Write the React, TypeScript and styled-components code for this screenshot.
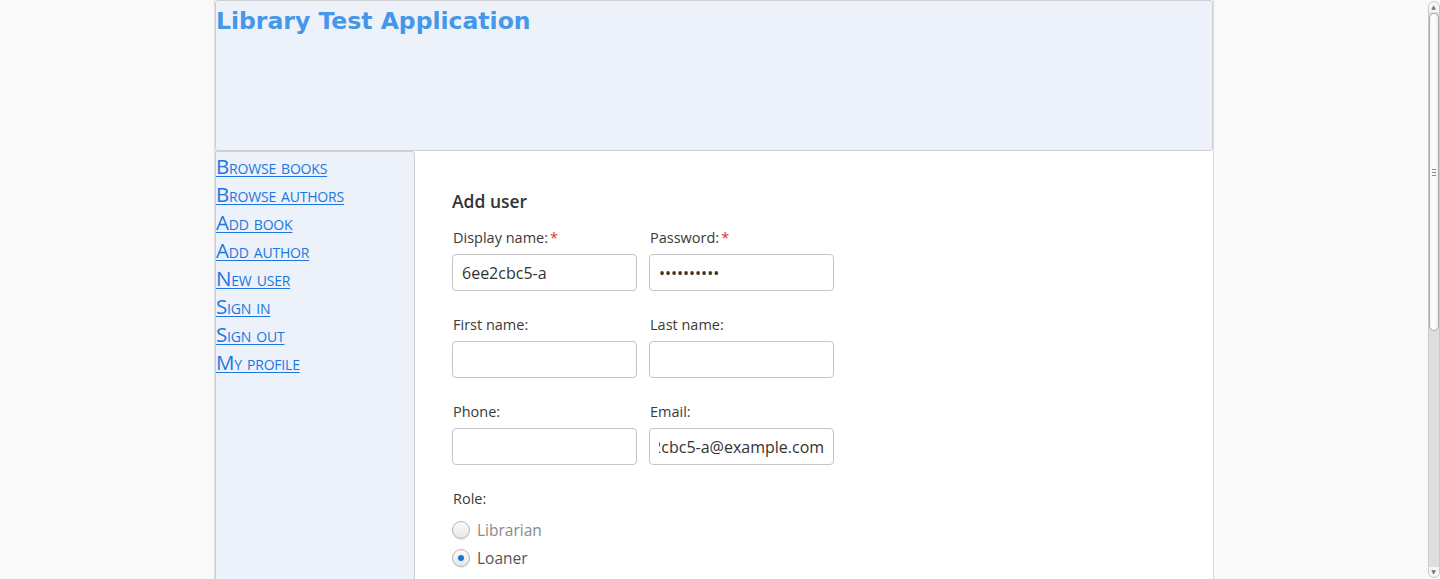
import React, { useEffect, useRef } from "react";
import styled, { createGlobalStyle } from "styled-components";

const Global = createGlobalStyle`
  html, body { margin: 0; padding: 0; }
  body { background: #f9f9f9; font-family: "Open Sans", "DejaVu Sans", sans-serif; }
  ::-webkit-scrollbar { width: 0; height: 0; }
`;

const Page = styled.div`
  width: 998px;
  margin-left: calc(50% - 506px);
  background: #ffffff;
  border-left: 1px solid #dcdcdc;
  border-right: 1px solid #dcdcdc;
  min-height: 1010px;
  display: flex;
  flex-direction: column;
`;

const Header = styled.header`
  height: 149px;
  background: #edf1f9;
  border: 1px solid #cfcfcf;
  border-radius: 3px;
`;

const Title = styled.h1`
  margin: 0;
  padding: 5px 0 0 0;
  font-family: "DejaVu Sans", sans-serif;
  font-weight: bold;
  font-size: 23.5px;
  line-height: 30px;
  color: #4597ea;
`;

const Body = styled.div`
  flex: 1;
  display: flex;
`;

const Sidebar = styled.nav`
  width: 198px;
  background: #edf1f9;
  border: 1px solid #cfcfcf;
  border-radius: 0 3px 0 0;
  display: flex;
  flex-direction: column;
`;

const NavLink = styled.a`
  font-family: "Open Sans", sans-serif;
  font-variant: small-caps;
  font-size: 20.5px;
  line-height: 28px;
  color: #1a78e0;
  text-decoration: underline;
  text-decoration-thickness: 1px;
  text-underline-offset: 2px;
  letter-spacing: -0.2px;
`;

const Main = styled.main`
  flex: 1;
  padding: 36px 37px;
`;

const Heading = styled.h2`
  margin: 0 0 13px 0;
  font-size: 17.5px;
  font-weight: 600;
  color: #333;
  line-height: 28px;
`;

const Grid = styled.div`
  display: grid;
  grid-template-columns: 185px 185px;
  column-gap: 12px;
  row-gap: 24px;
`;

const Field = styled.div`
  display: flex;
  flex-direction: column;
`;

const Label = styled.label`
  font-size: 14.5px;
  line-height: 20px;
  color: #3a3a3a;
  padding-left: 1px;
  margin-bottom: 6px;
`;

const Req = styled.span`
  color: #e03030;
  margin-left: 2px;
`;

const Input = styled.input`
  box-sizing: border-box;
  width: 185px;
  height: 37px;
  border: 1px solid #c4c4c4;
  border-radius: 4px;
  padding: 0 9px;
  font-family: "Open Sans", sans-serif;
  font-size: 16px;
  color: #333;
  background: #fff;
  outline: none;
`;

const RoleBlock = styled.div`
  margin-top: 24px;
  display: flex;
  flex-direction: column;
`;

const RadioList = styled.div`
  margin-top: 1px;
  display: flex;
  flex-direction: column;
`;

const RadioRow = styled.label<{ muted?: boolean }>`
  display: flex;
  align-items: center;
  gap: 7px;
  height: 28px;
  font-size: 15.5px;
  color: ${(p) => (p.muted ? "#8a8a8a" : "#555")};
`;

const Radio = styled.span<{ checked?: boolean }>`
  box-sizing: border-box;
  width: 18px;
  height: 18px;
  border-radius: 50%;
  border: 1px solid #b5b5b5;
  background: linear-gradient(#fbfbfb, #e6e6e6);
  box-shadow: 0 1px 1px rgba(0, 0, 0, 0.08);
  display: flex;
  align-items: center;
  justify-content: center;
  &::after {
    content: "";
    width: 6px;
    height: 6px;
    border-radius: 50%;
    background: ${(p) => (p.checked ? "#1a73d9" : "transparent")};
  }
`;

/* browser scrollbar lookalike, overlaying the right edge */
const ScrollBar = styled.div`
  position: fixed;
  top: 0;
  right: 0;
  width: 15px;
  height: 100vh;
  background: #f9f9f9;
  display: flex;
  flex-direction: column;
  align-items: center;
  padding: 1px 0;
  box-sizing: border-box;
`;

const Track = styled.div`
  width: 12px;
  flex: 1;
  margin-left: 2px;
  border-radius: 6px;
  background: #dedede;
  border: 1px solid #c9c9c9;
  box-sizing: border-box;
  display: flex;
  flex-direction: column;
`;

const ArrowCap = styled.div<{ down?: boolean }>`
  height: 10px;
  display: flex;
  align-items: center;
  justify-content: center;
  background: #f6f6f6;
  border-radius: ${(p) => (p.down ? "0 0 6px 6px" : "6px 6px 0 0")};
  font-size: 6px;
  color: #777;
  line-height: 1;
`;

const Thumb = styled.div`
  height: 318px;
  margin: 1px 0;
  border-radius: 6px;
  background: linear-gradient(90deg, #f7f7f7, #ffffff 50%, #ececec);
  border: 1px solid #a9a9a9;
  box-sizing: border-box;
  display: flex;
  align-items: center;
  justify-content: center;
`;

const Grip = styled.div`
  width: 4px;
  height: 5px;
  border-top: 1px solid #888;
  border-bottom: 1px solid #888;
  position: relative;
  &::after {
    content: "";
    position: absolute;
    left: 0;
    right: 0;
    top: 2px;
    border-top: 1px solid #888;
  }
`;

const Spacer = styled.div`
  flex: 1;
`;

export default function App() {
  const emailRef = useRef<HTMLInputElement>(null);
  useEffect(() => {
    if (emailRef.current) emailRef.current.scrollLeft = emailRef.current.scrollWidth;
  }, []);
  const links = [
    "Browse books",
    "Browse authors",
    "Add book",
    "Add author",
    "New user",
    "Sign in",
    "Sign out",
    "My profile",
  ];
  return (
    <>
      <Global />
      <Page>
        <Header>
          <Title>Library Test Application</Title>
        </Header>
        <Body>
          <Sidebar>
            {links.map((l) => (
              <NavLink key={l} href="#">
                {l}
              </NavLink>
            ))}
          </Sidebar>
          <Main>
            <Heading>Add user</Heading>
            <Grid>
              <Field>
                <Label>
                  Display name:<Req>*</Req>
                </Label>
                <Input defaultValue="6ee2cbc5-a" />
              </Field>
              <Field>
                <Label>
                  Password:<Req>*</Req>
                </Label>
                <Input type="password" defaultValue="1234567890" />
              </Field>
              <Field>
                <Label>First name:</Label>
                <Input />
              </Field>
              <Field>
                <Label>Last name:</Label>
                <Input />
              </Field>
              <Field>
                <Label>Phone:</Label>
                <Input />
              </Field>
              <Field>
                <Label>Email:</Label>
                <Input ref={emailRef} defaultValue="6ee2cbc5-a@example.com" />
              </Field>
            </Grid>
            <RoleBlock>
              <Label>Role:</Label>
              <RadioList>
                <RadioRow muted>
                  <Radio />
                  Librarian
                </RadioRow>
                <RadioRow>
                  <Radio checked />
                  Loaner
                </RadioRow>
              </RadioList>
            </RoleBlock>
          </Main>
        </Body>
      </Page>
      <ScrollBar aria-hidden>
        <Track>
          <ArrowCap>▲</ArrowCap>
          <Thumb>
            <Grip />
          </Thumb>
          <Spacer />
          <ArrowCap down>▼</ArrowCap>
        </Track>
      </ScrollBar>
    </>
  );
}
